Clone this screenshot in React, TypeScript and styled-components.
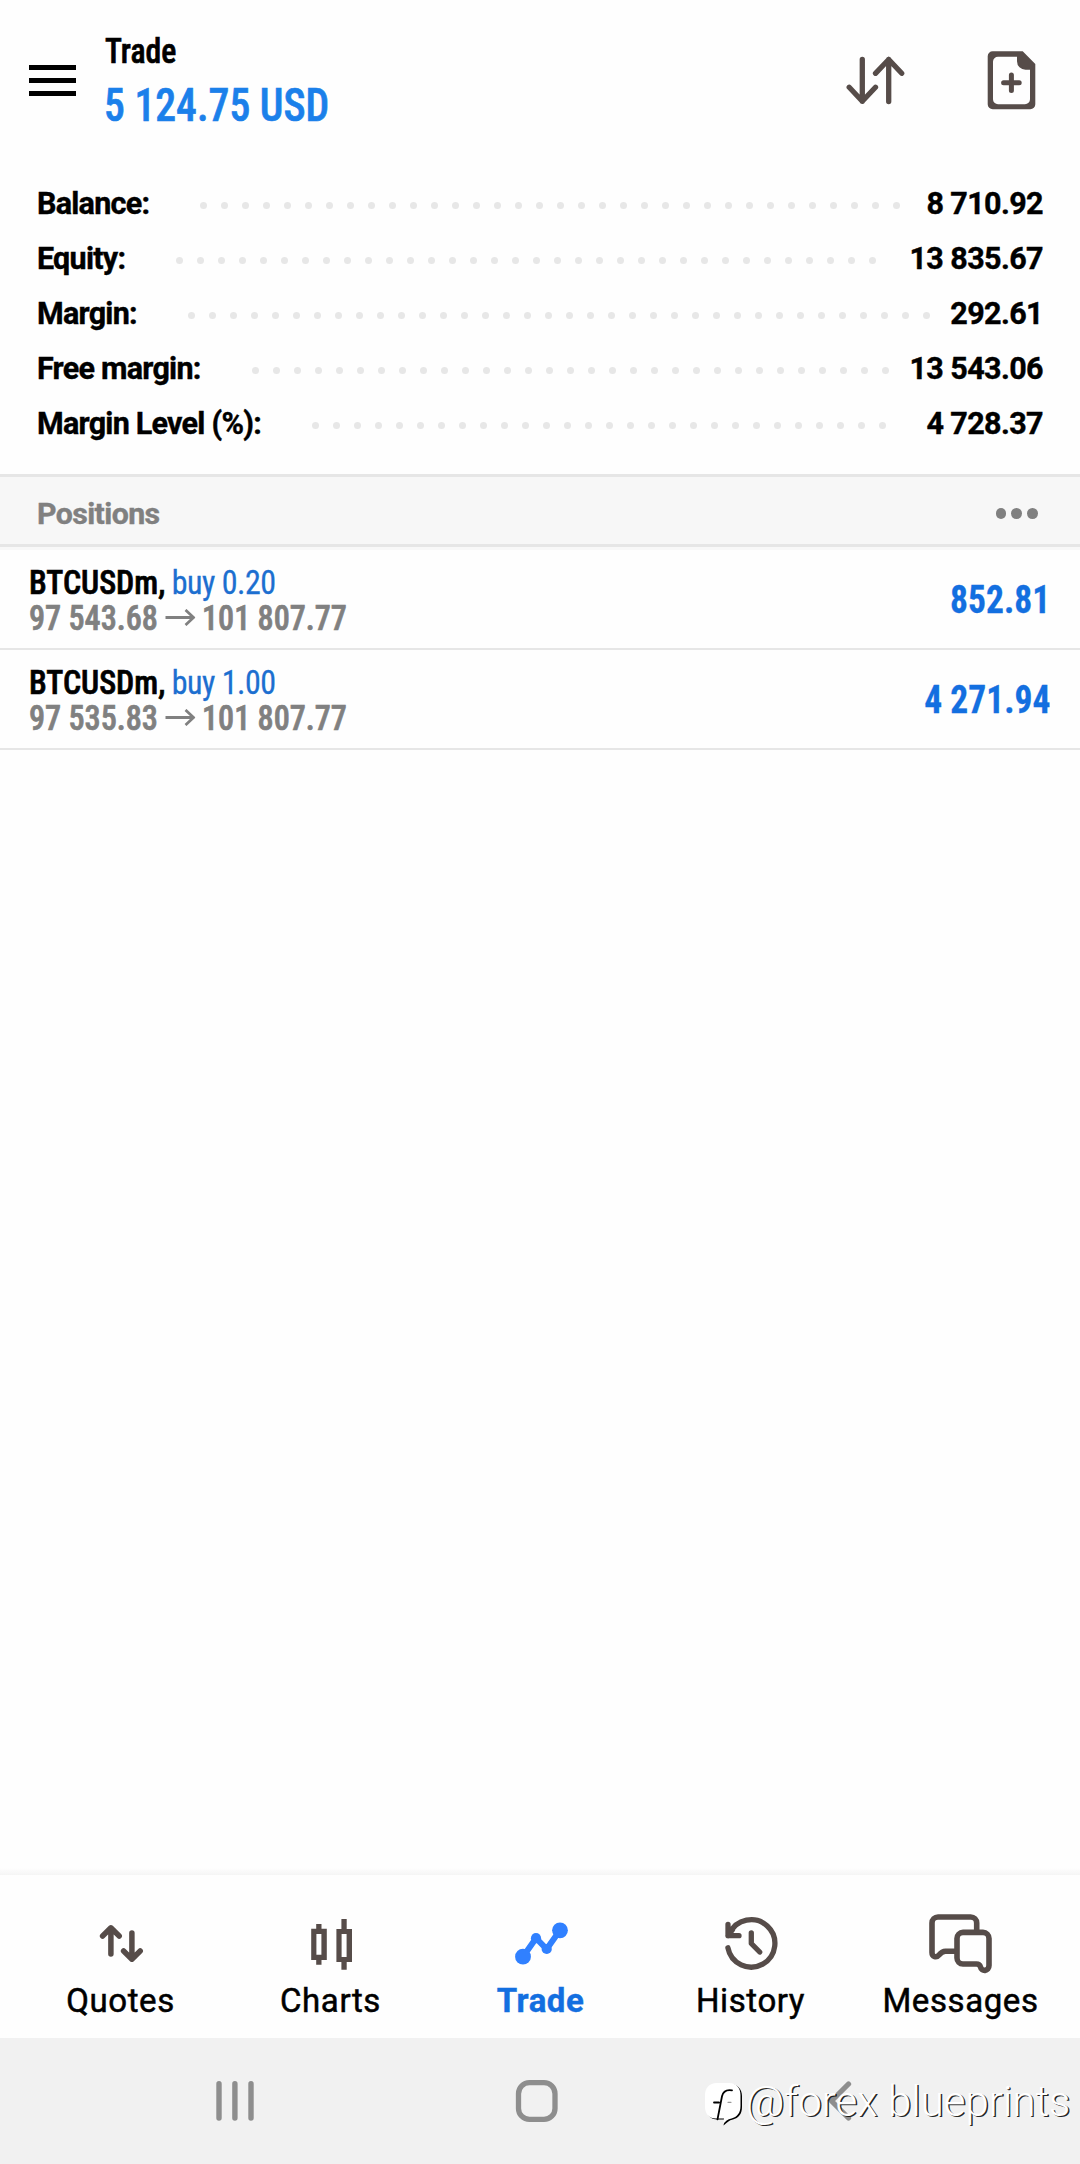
import React from "react";
import styled, { createGlobalStyle } from "styled-components";

const GlobalStyle = createGlobalStyle`
  * { box-sizing: border-box; }
  body { margin: 0; background: #fefefe; font-family: Roboto, sans-serif; color: #000; }
`;

const ink = "#564c49";

const Screen = styled.div`
  position: relative;
  display: flex;
  flex-direction: column;
  width: 1080px;
  height: 2164px;
  overflow: hidden;
  background: #fefefe;
`;

const Header = styled.header`
  display: flex;
  align-items: flex-start;
  height: 176px;
  padding: 31px 40px 0 29px;
`;

const MenuButton = styled.div`
  display: flex;
  flex-direction: column;
  gap: 8.2px;
  width: 47px;
  margin: 33.5px 29px 0 0;
`;

const MenuBar = styled.span`
  height: 5.2px;
  background: #000;
`;

const Heading = styled.div`
  display: flex;
  flex-direction: column;
  align-items: flex-start;
  gap: 9px;
  flex: 1;
`;

const Condensed = styled.span`
  display: block;
  font-family: "Roboto Condensed", Roboto, sans-serif;
  font-weight: 500;
  white-space: nowrap;
  transform-origin: left center;
  -webkit-text-stroke: 0.7px currentColor;
`;

const Title = styled(Condensed)`
  font-size: 34.5px;
  line-height: 40px;
  transform: scaleX(0.92);
`;

const Profit = styled(Condensed)`
  margin-left: -1px;
  font-size: 47px;
  line-height: 50px;
  color: #1b80ea;
  transform: scaleX(0.887);
`;

const HeaderActions = styled.div`
  display: flex;
  align-items: center;
  gap: 80px;
  margin-top: 19px;
`;

const Summary = styled.section`
  display: flex;
  flex-direction: column;
  height: 298px;
  padding: 0 37px;
`;

const SummaryRow = styled.div`
  display: flex;
  align-items: center;
  height: 55px;
  font-size: 30.5px;
  font-weight: 700;
  letter-spacing: -0.75px;
  line-height: 55px;
  white-space: nowrap;
  -webkit-text-stroke: 0.4px currentColor;
`;

const Leader = styled.div`
  display: flex;
  gap: 14px;
  margin: 4px 0 0 51px;
`;

const Dot = styled.span`
  width: 7px;
  height: 7px;
  border-radius: 50%;
  background: #e7e7e7;
`;

const SummaryValue = styled.span`
  margin-left: auto;
  letter-spacing: -0.6px;
`;

const SectionBar = styled.div`
  display: flex;
  align-items: center;
  justify-content: space-between;
  height: 76px;
  padding: 0 42px 0 37px;
  border-top: 3px solid #e6e6e6;
  background: linear-gradient(#f7f7f7 67px, #e6e6e6 67px, #e6e6e6 70px, #f8f8f8 70px);
`;

const SectionTitle = styled.span`
  font-size: 30.3px;
  font-weight: 700;
  letter-spacing: -0.6px;
  color: #808080;
  -webkit-text-stroke: 0.4px currentColor;
`;

const MoreDots = styled.div`
  display: flex;
  gap: 5px;
`;

const MoreDot = styled.span`
  width: 10.8px;
  height: 10.8px;
  border-radius: 50%;
  background: #808080;
`;

const PositionRow = styled.div`
  display: flex;
  align-items: center;
  justify-content: space-between;
  height: 100px;
  padding: 1px 30px 0 28.5px;
  border-bottom: 2px solid #e6e6e6;
`;

const PositionTitle = styled(Condensed)`
  font-size: 34px;
  line-height: 36px;
  transform: scaleX(0.94);
`;

const Side = styled.span`
  margin-left: -1px;
  font-weight: 400;
  letter-spacing: -0.5px;
  color: #1c6fd0;
  -webkit-text-stroke: 0.3px currentColor;
`;

const Prices = styled(Condensed)`
  font-size: 34.2px;
  line-height: 36px;
  color: #808080;
  transform: scaleX(0.94);
`;

const Arrow = styled.svg`
  margin: 0 7px 0 8px;
  vertical-align: 4px;
  fill: none;
  stroke: #808080;
  stroke-width: 2.9;
`;

const PositionProfit = styled(Condensed)`
  font-size: 38.4px;
  font-weight: 700;
  line-height: 40px;
  color: #136fe0;
  transform: scaleX(0.925);
  transform-origin: right center;
  -webkit-text-stroke-width: 0.3px;
`;

const Empty = styled.div`
  flex: 1;
  background: linear-gradient(#fefefe, #f5f5f5) bottom / 100% 7px no-repeat;
`;

const TabBar = styled.nav`
  display: flex;
  height: 163px;
  padding: 34px 15px 0;
`;

const Tab = styled.div<{ $active?: boolean }>`
  display: flex;
  flex-direction: column;
  align-items: center;
  gap: 2px;
  width: 210px;
  padding-left: 1px;
  font-size: 33px;
  font-weight: ${(p) => (p.$active ? 700 : 400)};
  letter-spacing: ${(p) => (p.$active ? 0.5 : 0.6)}px;
  line-height: 40px;
  color: ${(p) => (p.$active ? "#136fe0" : "#000")};
  -webkit-text-stroke: ${(p) => (p.$active ? 0.4 : 0.5)}px currentColor;
`;

const SystemBar = styled.footer`
  display: flex;
  align-items: center;
  height: 126px;
  padding-left: 214px;
  background: #f1f1f1;
`;

const SystemKey = styled.div<{ $width: number }>`
  width: ${(p) => p.$width}px;
`;

const Watermark = styled.div`
  position: absolute;
  left: 702px;
  top: 2077px;
  display: flex;
  align-items: center;
  height: 52px;
  color: #fff;
`;

const Handle = styled.span`
  margin-top: -3px;
  font-size: 42px;
  font-weight: 300;
  line-height: 52px;
  white-space: nowrap;
  text-shadow: 1.4px 1.2px 0.6px rgba(0, 0, 0, 0.85);
`;

const Stroke = styled.svg<{ $color?: string; $w?: number }>`
  display: block;
  fill: none;
  stroke: ${(p) => p.$color ?? ink};
  stroke-width: ${(p) => p.$w ?? 5.3};
  stroke-linecap: round;
  stroke-linejoin: round;
`;

const SortIcon = () => (
  <Stroke width="60" height="60" viewBox="846 50 60 60">
    <path d="M862.3 59.5V101.3M849.2 87.3l13.1 14 13.2-14M888.7 101.5V59.5M875.5 73.3l13.2-13.8 13 13.8" />
  </Stroke>
);

const NewOrderIcon = () => (
  <svg width="54" height="60" viewBox="986 50 54 60">
    <path
      fill={ink}
      fillRule="evenodd"
      d="M992.7 51.3h30l12.6 12.7v40.3a5 5 0 0 1-5 5h-37.6a5 5 0 0 1-5-5v-48a5 5 0 0 1 5-5zM998 56.8a5 5 0 0 0-5 5v37.5a5 5 0 0 0 5 5h27a5 5 0 0 0 5-5V69.7h-4.500a8.500 8.500 0 0 1-8.500-8.500v-4.400z"
    />
    <path d="M1011.4 75v15.6M1003.6 82.8h15.6" stroke={ink} strokeWidth="5" strokeLinecap="round" />
  </svg>
);

const QuotesIcon = () => (
  <Stroke width="70" height="70" viewBox="85 1909 70 70" $w={5.5}>
    <path d="M109.9 1954V1928M101.6 1936l8.3-8.2 8.3 8.2M130.9 1933V1959M122.6 1951l8.3 8.2 8.3-8.2" />
  </Stroke>
);

const ChartsIcon = () => (
  <svg width="70" height="70" viewBox="295 1909 70 70">
    <path
      fill={ink}
      fillRule="evenodd"
      d="M315.2 1924h5.3v4.8h5.3V1960h-5.3v4.8h-5.3V1960h-5V1928.8h5zM315.4 1934v20.8h5V1934zM340.4 1919h5.3v10h5.3v33h-5.3v7.8h-5.3V1962h-5V1929h5zM340.6 1934v23h5v-23z"
    />
  </svg>
);

const TradeIcon = () => (
  <svg width="70" height="70" viewBox="505 1909 70 70" fill="#3080ff">
    <path d="M522 1956.7L535 1938.2 545.7 1949 559 1930.3" fill="none" stroke="#3080ff" strokeWidth="6" />
    <circle cx="522" cy="1956.7" r="7.9" />
    <circle cx="535" cy="1938.2" r="5.1" />
    <circle cx="545.7" cy="1949" r="5.1" />
    <circle cx="559" cy="1930.3" r="7.9" />
  </svg>
);

const HistoryIcon = () => (
  <Stroke width="70" height="70" viewBox="715 1909 70 70">
    <path d="M726.9 1947.8A23.7 23.7 0 1 0 728.6 1933.6M727 1924.4V1935.7H738M727 1935.7l4.5-6M750.3 1932.8V1943.5L758.7 1952" />
  </Stroke>
);

const MessagesIcon = () => (
  <Stroke width="70" height="70" viewBox="925 1909 70 70" $w={5.6}>
    <path d="M975.7 1931V1923a6 6 0 0 0-6-6H937a6 6 0 0 0-6 6V1952.500c0 4.500 4.500 5.500 7 2.500 2-2.500 3.500-3.700 6.500-3.700H955" />
    <path d="M962 1932.400H982a6 6 0 0 1 6 6V1965.500c0 6-7.500 6.500-8.500 1.500-.6-2-1.500-3-4-3H962a6 6 0 0 1-6-6V1938.400a6 6 0 0 1 6-6z" />
  </Stroke>
);

const RecentsIcon = () => (
  <Stroke width="42" height="44" viewBox="214 2079 42 44" $color="#8e8e8e" $w={5.4}>
    <path d="M219 2083.700V2118M234.900 2083.700V2118M251 2083.700V2118" />
  </Stroke>
);

const HomeIcon = () => (
  <Stroke width="44" height="44" viewBox="515 2079 44 44" $color="#8e8e8e">
    <rect x="518.500" y="2082.700" width="36.500" height="36.700" rx="11" />
  </Stroke>
);

const BackIcon = () => (
  <Stroke width="28" height="44" viewBox="825 2079 28 44" $color="#8e8e8e">
    <path d="M848.500 2084L831.500 2101 848.500 2118" />
  </Stroke>
);

const BubbleLogo = () => (
  <svg width="44" height="52" viewBox="702 2078 44 52" fill="none" strokeLinecap="round">
    <path d="M717 2085h13c7.500 0 12 5 12 12v11c0 7-3.500 11-9 12.500-4 .8-6 3-9.500 6l1-6h-7c-7 0-11-4.500-11-12V2097c0-7 4-12 10.500-12z" fill="#000" />
    <path d="M717 2084h12c7.500 0 11.500 5 11.500 12v11c0 7-3.500 11-9 12.500-4 .8-6 2.500-8.500 6l1-6h-8c-7 0-11-4.500-11-12V2096c0-7 4-12 12-12z" fill="#fff" />
    <path d="M732 2091.300c-6-1-9 1.500-10 6l-4.500 23M714 2103.500h5" stroke="#000" strokeWidth="1.800" />
    <path d="M728 2103.300h3" stroke="#999" strokeWidth="1.200" />
  </svg>
);

const summary = [
  { label: "Balance:", value: "8 710.92", dots: 34 },
  { label: "Equity:", value: "13 835.67", dots: 34 },
  { label: "Margin:", value: "292.61", dots: 36 },
  { label: "Free margin:", value: "13 543.06", dots: 31 },
  { label: "Margin Level (%):", value: "4 728.37", dots: 28 },
];

const positions = [
  { symbol: "BTCUSDm,", side: "buy 0.20", open: "97 543.68", now: "101 807.77", profit: "852.81" },
  { symbol: "BTCUSDm,", side: "buy 1.00", open: "97 535.83", now: "101 807.77", profit: "4 271.94" },
];

const tabs = [
  { name: "Quotes", Icon: QuotesIcon },
  { name: "Charts", Icon: ChartsIcon },
  { name: "Trade", Icon: TradeIcon, active: true },
  { name: "History", Icon: HistoryIcon },
  { name: "Messages", Icon: MessagesIcon },
];

export default function App() {
  return (
    <Screen>
      <GlobalStyle />
      <Header>
        <MenuButton>
          <MenuBar />
          <MenuBar />
          <MenuBar />
        </MenuButton>
        <Heading>
          <Title>Trade</Title>
          <Profit>5 124.75 USD</Profit>
        </Heading>
        <HeaderActions>
          <SortIcon />
          <NewOrderIcon />
        </HeaderActions>
      </Header>
      <Summary>
        {summary.map((row) => (
          <SummaryRow key={row.label}>
            <span>{row.label}</span>
            <Leader>
              {Array.from({ length: row.dots }, (_, i) => (
                <Dot key={i} />
              ))}
            </Leader>
            <SummaryValue>{row.value}</SummaryValue>
          </SummaryRow>
        ))}
      </Summary>
      <SectionBar>
        <SectionTitle>Positions</SectionTitle>
        <MoreDots>
          <MoreDot />
          <MoreDot />
          <MoreDot />
        </MoreDots>
      </SectionBar>
      {positions.map((p) => (
        <PositionRow key={p.open}>
          <div>
            <PositionTitle>
              {p.symbol} <Side>{p.side}</Side>
            </PositionTitle>
            <Prices>
              {p.open}
              <Arrow width="32" height="17" viewBox="0 0 32 17">
                <path d="M0 8.500H30M21.500 1L30 8.500 21.500 16" />
              </Arrow>
              {p.now}
            </Prices>
          </div>
          <PositionProfit>{p.profit}</PositionProfit>
        </PositionRow>
      ))}
      <Empty />
      <TabBar>
        {tabs.map(({ name, Icon, active }) => (
          <Tab key={name} $active={active}>
            <Icon />
            {name}
          </Tab>
        ))}
      </TabBar>
      <SystemBar>
        <SystemKey $width={301}>
          <RecentsIcon />
        </SystemKey>
        <SystemKey $width={310}>
          <HomeIcon />
        </SystemKey>
        <BackIcon />
      </SystemBar>
      <Watermark>
        <BubbleLogo />
        <Handle>@forex blueprints</Handle>
      </Watermark>
    </Screen>
  );
}
